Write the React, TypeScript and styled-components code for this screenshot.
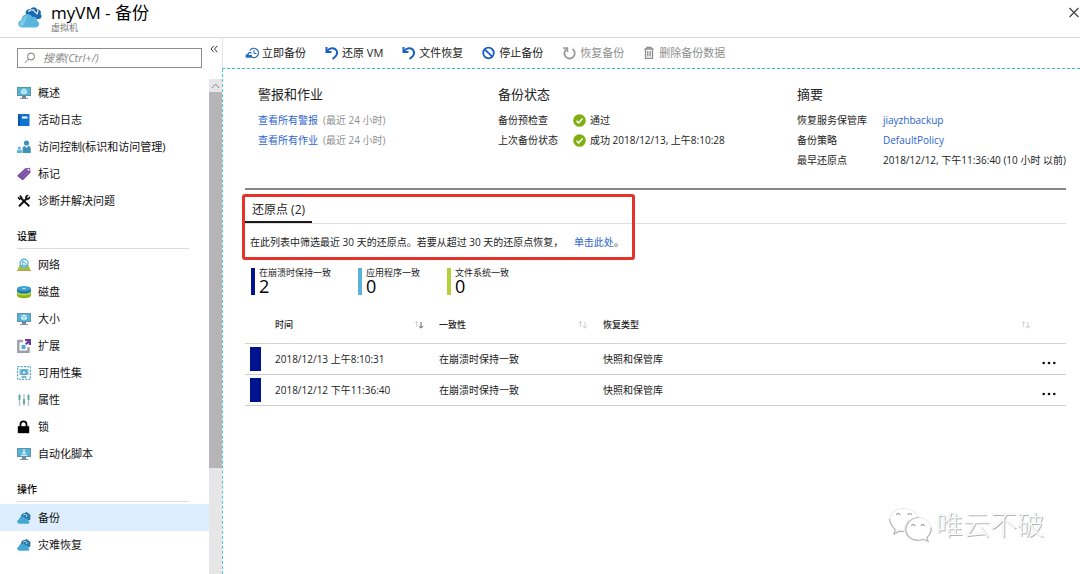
import React from "react";
import styled, { createGlobalStyle, css } from "styled-components";

const GlobalStyle = createGlobalStyle`
  *, *::before, *::after { box-sizing: border-box; }
  body {
    margin: 0;
    background: #fff;
    color: #222;
    font: 10px/20px "Open Sans", "Noto Sans CJK SC", sans-serif;
  }
  button, input { font: inherit; color: inherit; }
  h1, h2, h3, p, ul, dl, dd { margin: 0; padding: 0; }
  ul { list-style: none; }
  svg { display: block; flex: none; }
`;

const resetButton = css`
  border: 0;
  padding: 0;
  background: none;
  cursor: pointer;
`;

const Shell = styled.div`
  position: relative;
  display: flex;
  flex-direction: column;
  height: 100vh;
  overflow: hidden;
`;

const Header = styled.header`
  display: flex;
  flex: none;
  align-items: flex-start;
  gap: 8px;
  height: 38px;
  padding: 4px 0 0 17px;
  border-bottom: 1px solid #d9d9d9;
`;

const TitleBlock = styled.div`
  flex: 1;
`;

const Title = styled.h1`
  font-size: 17px;
  font-weight: 400;
  line-height: 18px;
  color: #000;
`;

const Subtitle = styled.p`
  font-size: 9px;
  line-height: 12px;
  color: #777;
`;

const CloseButton = styled.button`
  ${resetButton}
  padding-top: 3px;
`;

const Body = styled.div`
  display: flex;
  flex: 1;
  min-height: 0;
`;

const Sidebar = styled.aside`
  display: flex;
  flex: none;
  flex-direction: column;
  width: 222px;
`;

const SidebarTop = styled.div`
  display: flex;
  flex: none;
  align-items: flex-start;
  gap: 8px;
  height: 41px;
  padding: 4px 4px 0 17px;
`;

const SearchBox = styled.label`
  display: flex;
  flex: 1;
  align-items: center;
  gap: 7px;
  height: 20px;
  margin-top: 6px;
  padding-left: 6px;
  border: 1px solid #8c8c8c;
`;

const SearchInput = styled.input`
  flex: 1;
  min-width: 0;
  padding: 0;
  border: 0;
  outline: 0;
  background: none;
  font-size: 11px;
  line-height: 18px;
  &::placeholder {
    color: #8a8a8a;
    font-style: italic;
    opacity: 1;
  }
`;

const CollapseButton = styled.button`
  ${resetButton}
  padding-top: 3px;
`;

const SidebarBody = styled.div`
  display: flex;
  flex: 1;
  min-height: 0;
`;

const Nav = styled.nav`
  flex: 1;
  overflow: hidden;
`;

const NavHeading = styled.h2`
  margin: 12px 20px 2px 17px;
  padding-bottom: 2px;
  border-bottom: 1px solid #dcdcdc;
  font-size: 10px;
  font-weight: 500;
  line-height: 20px;
  color: #000;
`;

const NavLink = styled.a<{ $active?: boolean }>`
  display: flex;
  align-items: center;
  gap: 7px;
  height: 27px;
  padding-left: 17px;
  background: ${(p) => (p.$active ? "#dceeff" : "transparent")};
  color: #111;
  font-size: 11px;
  text-decoration: none;
`;

const ScrollTrack = styled.div`
  display: flex;
  flex: none;
  flex-direction: column;
  width: 13px;
  background: #e6e6e6;
`;

const ScrollUp = styled.button`
  ${resetButton}
  display: flex;
  flex: none;
  align-items: center;
  justify-content: center;
  height: 13px;
`;

const ScrollThumb = styled.div`
  height: 76%;
  background: #b5b5b5;
`;

const Main = styled.main`
  display: flex;
  flex: 1;
  flex-direction: column;
  min-width: 0;
`;

const Toolbar = styled.div`
  display: flex;
  flex: none;
  align-items: center;
  gap: 19px;
  height: 31px;
  padding-left: 22px;
  border-left: 1px solid #e2e2e2;
  border-bottom: 1px dashed #3fb6cf;
`;

const ToolButton = styled.button`
  ${resetButton}
  display: flex;
  align-items: center;
  gap: 3px;
  font-size: 11px;
  white-space: nowrap;
  &:disabled { color: #8f8f8f; }
`;

const Content = styled.div`
  flex: 1;
  padding: 15px 14px 0 22px;
  border-left: 1px dashed #45cbd6;
`;

const Summary = styled.div`
  display: grid;
  grid-template-columns: minmax(0, 240fr) minmax(0, 299fr) minmax(0, 269fr);
  padding: 0 0 18px 13px;
  border-bottom: 2px solid #868686;
  white-space: nowrap;
`;

const SummaryHeading = styled.h2`
  margin-bottom: 6px;
  font-size: 13px;
  font-weight: 400;
  line-height: 20px;
`;

const AlertLine = styled.p`
  display: flex;
  gap: 5px;
`;

const Facts = styled.dl<{ $label: number }>`
  display: grid;
  grid-template-columns: ${(p) => p.$label}px auto;
  justify-content: start;
`;

const FactValue = styled.dd`
  display: flex;
  align-items: center;
  gap: 4px;
`;

const Link = styled.a`
  color: #2b63cf;
  text-decoration: none;
`;

const Muted = styled.span`
  color: #8f8f8f;
`;

const RestorePoints = styled.section`
  position: relative;
  padding-top: 9px;
`;

const Highlight = styled.div`
  position: absolute;
  top: 4px;
  left: -3px;
  width: 393px;
  height: 66px;
  border: 3px solid #e5322b;
  border-radius: 3px;
  pointer-events: none;
`;

const TabBar = styled.div`
  display: flex;
  height: 25px;
  border-bottom: 1px solid #dedede;
`;

const Tab = styled.button`
  ${resetButton}
  padding: 0 7px;
  border-bottom: 2px solid #1a1a1a;
  font-size: 12px;
  line-height: 22px;
`;

const Hint = styled.p`
  padding: 8px 0 0 5px;
`;

const HintLink = styled(Link)`
  margin-left: 8px;
`;

const Stats = styled.ul`
  display: flex;
  gap: 27px;
  padding: 16px 0 0 6px;
`;

const Stat = styled.li<{ $color: string }>`
  height: 27px;
  padding-left: 4px;
  border-left: 4px solid ${(p) => p.$color};
`;

const StatLabel = styled.p`
  font-size: 9px;
  line-height: 10px;
`;

const StatValue = styled.p`
  font-size: 18px;
  line-height: 17px;
  color: #000;
`;

const Table = styled.table`
  width: 100%;
  margin-top: 13px;
  border-collapse: collapse;
  table-layout: fixed;
  text-align: left;
`;

const Th = styled.th<{ $inset?: number }>`
  height: 35px;
  padding: 0 ${(p) => p.$inset ?? 15}px 0 0;
  border-bottom: 1px solid #d4d4d4;
  font-size: 9px;
  font-weight: 500;
`;

const ThInner = styled.div`
  display: flex;
  align-items: center;
  justify-content: space-between;
`;

const Td = styled.td`
  height: 31px;
  padding: 0;
  border-bottom: 1px solid #cfcfcf;
`;

const Swatch = styled.div`
  width: 11px;
  height: 24px;
  margin-left: 5px;
  background: #00138f;
`;

const MoreButton = styled.button`
  ${resetButton}
  display: block;
  margin: 8px 10px 0 auto;
`;

const Watermark = styled.div`
  position: absolute;
  right: 36px;
  bottom: 31px;
  display: flex;
  align-items: center;
  gap: 4px;
  color: #fff;
  font-size: 27px;
  font-weight: 300;
  line-height: 34px;
  text-shadow: 1px 1px 0 #b4b4b4, 0 0 1px #d0d0d0;
  pointer-events: none;
`;

const MonitorIcon = ({ download = false }: { download?: boolean }) => (
  <svg width="14" height="14" viewBox="0 0 14 14">
    <path d="M0 1h14v9H0z" fill="#5c93ad" />
    <path d="M1 2h12v7H1z" fill="#55b4d8" />
    <path d="M5 10h4v2H5z" fill="#748894" />
    <path d="M3 12h8v1H3z" fill="#8b8fa5" />
    {download ? (
      <path d="M7 2v5M5 5l2 2 2-2M4 8.2h6" fill="none" stroke="#fff" />
    ) : (
      <>
        <path d="m7 2.6 2.8 1.5v3L7 8.6 4.2 7.1v-3z" fill="#d9f4fc" />
        <path d="M7 5.3 4.5 4M7 5.3 9.5 4M7 5.3v3" stroke="#55b4d8" strokeWidth=".7" />
      </>
    )}
  </svg>
);

const BookIcon = () => (
  <svg width="14" height="14" viewBox="0 0 14 14">
    <path d="M1 1h11.5v12H1z" fill="#1173cf" />
    <path d="M1 1h2v12H1z" fill="#07569f" />
    <path d="M5 3.5h5.5v2H5z" fill="#fff" />
  </svg>
);

const PeopleIcon = () => (
  <svg width="14" height="14" viewBox="0 0 14 14">
    <circle cx="9.5" cy="3" r="2.6" fill="#3c93b8" />
    <path d="M5.5 13V9c0-2 1.2-3 2.4-3l1.6 2 1.6-2c1.6 0 2.7 1 2.7 3v4z" fill="#3c93b8" />
    <circle cx="2.4" cy="8" r="1.5" fill="#57b4d5" />
    <path d="M0 13v-2c0-1 .7-1.5 1.2-1.5l1.2 1 1.2-1c.7 0 1.2.5 1.2 1.5v2z" fill="#57b4d5" />
  </svg>
);

const TagIcon = () => (
  <svg width="14" height="14" viewBox="0 0 14 14">
    <path d="M8.2 1.2 13 .8l.6 4.8-7.2 7.2c-.5.5-1 .5-1.5 0L.8 9.4c-.5-.5-.5-1 0-1.5z" fill="#7c4ea5" />
    <path d="m9 3-6 6M11 5l-5.5 5.5" stroke="#9672b8" strokeWidth=".8" />
    <circle cx="11.5" cy="2.8" r="1" fill="#fff" />
  </svg>
);

const ToolsIcon = () => (
  <svg width="14" height="14" viewBox="0 0 14 14" fill="none" stroke="#111">
    <path d="m2 12.3 7.5-7.6" strokeWidth="2" />
    <path d="m3.5 3.8 8.8 8.5" strokeWidth="2" />
    <path d="M12.8 2.5 11 4.3 9.6 3 11.4 1.2C9.7.6 8 2 8.4 4.1l1.7 1.7c2 .2 3.4-1.5 2.7-3.3z" fill="#111" strokeWidth=".5" />
    <path d="M1 3.3 2.6 5l1.8-1.7L2.8 1.6" strokeWidth="1.6" />
  </svg>
);

const NetworkIcon = () => (
  <svg width="14" height="14" viewBox="0 0 14 14">
    <path d="M2.6 7h8.8L14 13H0z" fill="#9fc045" />
    <path d="M.5 12h13l.5 1H0z" fill="#c69a4f" />
    <circle cx="7" cy="5.2" r="4" fill="#e8f7fd" stroke="#50acd5" strokeWidth="1.2" />
    <path d="m4.5 4.3 2-1 3 3.5M6.5 3.3 5 7.3h4" fill="none" stroke="#3d95c5" strokeWidth=".8" />
  </svg>
);

const DiskIcon = () => (
  <svg width="14" height="14" viewBox="0 0 14 14">
    <path d="M0 8v2.500c0 1.500 3 2.700 7 2.700s7-1.200 7-2.700V8z" fill="#8bb51a" />
    <ellipse cx="7" cy="8" rx="7" ry="2.6" fill="#b9d94b" />
    <path d="M0 3.600V6c0 1.500 3 2.600 7 2.600S14 7.500 14 6V3.600z" fill="#1c76a9" />
    <ellipse cx="7" cy="3.6" rx="7" ry="2.7" fill="#409fd0" />
    <ellipse cx="7" cy="3.5" rx="2" ry=".8" fill="#a6dbf2" />
  </svg>
);

const ExtensionIcon = () => (
  <svg width="14" height="14" viewBox="0 0 14 14" fill="none">
    <path d="M6 2H1.300v10.700h10.200V8" stroke="#9aa0a5" strokeWidth="2.4" />
    <path d="M4.500 6h4v4h-4z" fill="#4fa9dc" />
    <path d="M8 0h6v6h-2.200V4L9.500 6 8 4.500 10.400 2H8z" fill="#6b3d98" />
  </svg>
);

const AvailabilityIcon = () => (
  <svg width="14" height="14" viewBox="0 0 14 14" fill="none">
    <path d="M.6.6h12.800v12.800H.6z" stroke="#56a3c8" strokeWidth="1.2" strokeDasharray="2 1.2" />
    <path d="M2.500 3h9v6h-9z" fill="#7dbfda" />
    <circle cx="7" cy="6.5" r="2.7" fill="#3f91b8" />
    <path d="m7 4.800 1.500.8v1.800L7 8.200l-1.500-.8V5.600z" fill="#c8ecf8" />
    <path d="M4.500 11h5" stroke="#6599af" strokeWidth="1.5" />
  </svg>
);

const SlidersIcon = () => (
  <svg width="14" height="14" viewBox="0 0 14 14" fill="none">
    <path d="M2.500 1v12M7 1v12M11.500 1v12" stroke="#b6c2c5" strokeWidth="1.4" />
    <path d="M2.500 2v5M7 6v5M11.500 2v5" stroke="#5da79f" strokeWidth="1.8" />
  </svg>
);

const LockIcon = () => (
  <svg width="14" height="14" viewBox="0 0 14 14">
    <path d="M3.500 7V4.300a3 3 0 0 1 6 0V7" fill="none" stroke="#000" strokeWidth="1.8" />
    <path d="M.8 6.200h11.400v7H.8z" fill="#000" />
  </svg>
);

const BackupIcon = () => (
  <svg width="14" height="14" viewBox="0 0 14 14">
    <path d="M3.800 6C4 3 6 1.800 8 2.100L9.500.8 13.500 4l-.3 5-3 .5z" fill="#2d7aa8" />
    <path d="M6 4.300c1-1.500 3.500-1.200 4.200.7L9 6" fill="none" stroke="#d9eef8" strokeWidth=".8" />
    <path d="M2.700 12.800C-.5 12.700-.5 8.800 2 8.500c.2-3.700 5.300-4.200 6.300-1 2.200-.2 3 1 2.700 2.200 2 .3 1.800 3.100-.2 3.100z" fill="#45a7d4" />
  </svg>
);

const VaultIcon = () => (
  <svg width="26" height="24" viewBox="0 0 26 24">
    <path d="M9 10C7.500 6 12 4.500 13.500 5.500 14.500 2.500 19 2.500 20 5.500c3.500-.2 4.600 2.500 3.500 4.500 2 1.500 1 5-1.500 5h-7z" fill="#1767b5" />
    <path d="M11.500 8c1-3 6-2.500 6.500.5M16 5.500l4 4.500 1.200-4" fill="none" stroke="#fff" strokeWidth="1.1" />
    <path d="M5.500 23.500C.3 23.500-.3 17 4.500 16.200 4.300 9.600 13 7.800 15.300 13c3.500-.8 5.500 1.700 4.700 4 3.500.8 2.700 6.500-1.500 6.500z" fill="#58b5dc" />
    <path d="M5 22.500c-3.500-.5-3.200-4.700.7-5.200-.1-4 3-5.900 5.500-5.600C8 13 9 19 5 22.500z" fill="#83cae6" />
  </svg>
);

const BackupNowIcon = () => (
  <svg width="14" height="14" viewBox="0 0 14 14" fill="none" stroke="#286bc1">
    <path d="M5 4.500A4.600 4.600 0 1 1 6.800 11H1.500c-1-1 0-2.600 1.600-2.600C3 6.400 5.300 5.800 6.200 7.300" strokeWidth="1.3" />
    <path d="M9 4v3.500h2.500" strokeWidth="1" />
    <path d="M2 10h5" strokeWidth="2" />
  </svg>
);

const UndoIcon = () => (
  <svg width="14" height="14" viewBox="0 0 14 14" fill="none" stroke="#1b5fc1" strokeWidth="2">
    <path d="M1.500 1v5h5" />
    <path d="M2 5.500C4 2 9 1 11.300 4.200c2 3-.3 6.300-3.800 8.800" />
  </svg>
);

const StopIcon = () => (
  <svg width="14" height="14" viewBox="0 0 14 14" fill="none" stroke="#1b5fc1" strokeWidth="1.8">
    <circle cx="6.5" cy="7" r="5.3" />
    <path d="m2.800 3.300 7.400 7.400" />
  </svg>
);

const ResumeIcon = () => (
  <svg width="15" height="14" viewBox="0 0 15 14" fill="none" stroke="#999" strokeWidth="1.8">
    <path d="M5 2.800A5.200 5.200 0 1 0 10.500 3" />
    <path d="M1 2h4.500v4" strokeWidth="1.5" />
  </svg>
);

const TrashIcon = () => (
  <svg width="13" height="14" viewBox="0 0 13 14" fill="none" stroke="#8c8c8c" strokeWidth="1.3">
    <path d="M1.500 3h9M4 3V1.300h4V3M2.500 3v9.300h7V3M4.800 5v5.500M7.200 5v5.500" />
  </svg>
);

const CheckIcon = () => (
  <svg width="13" height="13" viewBox="0 0 13 13">
    <circle cx="6.5" cy="6.5" r="6.3" fill="#7fb010" />
    <path d="m3.500 6.700 2.100 2.100 4-4.300" fill="none" stroke="#fff" strokeWidth="1.5" />
  </svg>
);

const SortIcon = ({ active = false }: { active?: boolean }) => (
  <svg width="10" height="10" viewBox="0 0 10 10" fill="none">
    <path d="M2.500 7V1.500M1 3l1.500-1.500L4 3" stroke="#ccc" strokeWidth=".8" />
    <path d="M7 2v6M4.800 6 7 8.200 9.200 6" stroke={active ? "#666" : "#ccc"} strokeWidth="1" />
  </svg>
);

const DotsIcon = () => (
  <svg width="14" height="4" viewBox="0 0 14 4" fill="#111">
    <circle cx="1.7" cy="2" r="1.3" />
    <circle cx="7" cy="2" r="1.3" />
    <circle cx="12.3" cy="2" r="1.3" />
  </svg>
);

const ChatIcon = () => (
  <svg width="44" height="36" viewBox="0 0 44 36" fill="none" stroke="#b9b9b9" strokeWidth="1.2">
    <path d="M16 25c-2 0-3-.2-4.500-.8L6 27l1.200-4.500C-3 14 2 2 15.500 1.500 24 1.500 29 6 30 11" stroke="#ececec" />
    <path d="M1.500 12c.5 4.500 3 8 5.700 10.500L6 27l5.500-2.800 5.500.3" />
    <path d="M31 10.500C11 11 13 33.500 30 33.300c2 0 4-.3 5.500-1l4.500 2.200-1-4c8-7.500 2.500-20-8-20z" fill="#fff" stroke="#ececec" />
    <path d="M31 10.500c-17 1-17.500 22.500-1 22.800 2 0 4-.3 5.500-1l4.500 2.200-1-4c3-2.500 4.500-6 4.200-10" />
    <path d="M8.500 8c.5-2 3-2 3.500 0M20 8c.5-2 3-2 3.500 0M23.500 19c.5-2 3-2 3.500 0M33 19c.5-2 3-2 3.500 0" stroke="#999" />
  </svg>
);

type NavItem = { label: string; icon: React.ReactNode; active?: boolean };

const navGroups: { heading?: string; items: NavItem[] }[] = [
  {
    items: [
      { label: "概述", icon: <MonitorIcon /> },
      { label: "活动日志", icon: <BookIcon /> },
      { label: "访问控制(标识和访问管理)", icon: <PeopleIcon /> },
      { label: "标记", icon: <TagIcon /> },
      { label: "诊断并解决问题", icon: <ToolsIcon /> },
    ],
  },
  {
    heading: "设置",
    items: [
      { label: "网络", icon: <NetworkIcon /> },
      { label: "磁盘", icon: <DiskIcon /> },
      { label: "大小", icon: <MonitorIcon /> },
      { label: "扩展", icon: <ExtensionIcon /> },
      { label: "可用性集", icon: <AvailabilityIcon /> },
      { label: "属性", icon: <SlidersIcon /> },
      { label: "锁", icon: <LockIcon /> },
      { label: "自动化脚本", icon: <MonitorIcon download /> },
    ],
  },
  {
    heading: "操作",
    items: [
      { label: "备份", icon: <BackupIcon />, active: true },
      { label: "灾难恢复", icon: <BackupIcon /> },
    ],
  },
  { heading: "监视", items: [] },
];

const tools = [
  { label: "立即备份", icon: <BackupNowIcon /> },
  { label: "还原 VM", icon: <UndoIcon /> },
  { label: "文件恢复", icon: <UndoIcon /> },
  { label: "停止备份", icon: <StopIcon /> },
  { label: "恢复备份", icon: <ResumeIcon />, disabled: true },
  { label: "删除备份数据", icon: <TrashIcon />, disabled: true },
];

const stats = [
  { label: "在崩溃时保持一致", value: 2, color: "#00138f" },
  { label: "应用程序一致", value: 0, color: "#5cb1d6" },
  { label: "文件系统一致", value: 0, color: "#b6cf3a" },
];

const points = [
  { time: "2018/12/13 上午8:10:31", consistency: "在崩溃时保持一致", type: "快照和保管库" },
  { time: "2018/12/12 下午11:36:40", consistency: "在崩溃时保持一致", type: "快照和保管库" },
];

export default function App() {
  return (
    <Shell lang="zh-CN">
      <GlobalStyle />
      <Header>
        <VaultIcon />
        <TitleBlock>
          <Title>myVM - 备份</Title>
          <Subtitle>虚拟机</Subtitle>
        </TitleBlock>
        <CloseButton aria-label="关闭">
          <svg width="12" height="12" viewBox="0 0 12 12" stroke="#444" strokeWidth="1.2">
            <path d="m1.500 1 9 9M10.500 1l-9 9" />
          </svg>
        </CloseButton>
      </Header>
      <Body>
        <Sidebar>
          <SidebarTop>
            <SearchBox>
              <svg width="12" height="12" viewBox="0 0 12 12" fill="none" stroke="#777">
                <circle cx="7" cy="4.5" r="3.5" />
                <path d="M4.500 7 1 10.800" />
              </svg>
              <SearchInput type="text" aria-label="搜索" placeholder="搜索(Ctrl+/)" />
            </SearchBox>
            <CollapseButton aria-label="折叠菜单">
              <svg width="8" height="8" viewBox="0 0 8 8" fill="none" stroke="#333">
                <path d="M3.800.8 1 4l2.800 3.200M7.300.8 4.500 4l2.800 3.200" />
              </svg>
            </CollapseButton>
          </SidebarTop>
          <SidebarBody>
            <Nav>
              {navGroups.map((group, i) => (
                <React.Fragment key={i}>
                  {group.heading && <NavHeading>{group.heading}</NavHeading>}
                  <ul>
                    {group.items.map((item) => (
                      <li key={item.label}>
                        <NavLink href="#" $active={item.active}>
                          {item.icon}
                          {item.label}
                        </NavLink>
                      </li>
                    ))}
                  </ul>
                </React.Fragment>
              ))}
            </Nav>
            <ScrollTrack>
              <ScrollUp aria-label="向上滚动">
                <svg width="9" height="6" viewBox="0 0 9 6" fill="none" stroke="#888">
                  <path d="m1 5 3.500-4L8 5" />
                </svg>
              </ScrollUp>
              <ScrollThumb />
            </ScrollTrack>
          </SidebarBody>
        </Sidebar>
        <Main>
          <Toolbar>
            {tools.map((tool) => (
              <ToolButton key={tool.label} disabled={tool.disabled}>
                {tool.icon}
                {tool.label}
              </ToolButton>
            ))}
          </Toolbar>
          <Content>
            <Summary>
              <section>
                <SummaryHeading>警报和作业</SummaryHeading>
                <AlertLine><Link href="#">查看所有警报</Link><Muted>(最近 24 小时)</Muted></AlertLine>
                <AlertLine><Link href="#">查看所有作业</Link><Muted>(最近 24 小时)</Muted></AlertLine>
              </section>
              <section>
                <SummaryHeading>备份状态</SummaryHeading>
                <Facts $label={75}>
                  <dt>备份预检查</dt>
                  <FactValue><CheckIcon />通过</FactValue>
                  <dt>上次备份状态</dt>
                  <FactValue><CheckIcon />成功 2018/12/13, 上午8:10:28</FactValue>
                </Facts>
              </section>
              <section>
                <SummaryHeading>摘要</SummaryHeading>
                <Facts $label={86}>
                  <dt>恢复服务保管库</dt>
                  <FactValue><Link href="#">jiayzhbackup</Link></FactValue>
                  <dt>备份策略</dt>
                  <FactValue><Link href="#">DefaultPolicy</Link></FactValue>
                  <dt>最早还原点</dt>
                  <FactValue>2018/12/12, 下午11:36:40 (10 小时 以前)</FactValue>
                </Facts>
              </section>
            </Summary>
            <RestorePoints>
              <TabBar role="tablist">
                <Tab role="tab" aria-selected="true">还原点 (2)</Tab>
              </TabBar>
              <Hint>
                在此列表中筛选最近 30 天的还原点。若要从超过 30 天的还原点恢复，{" "}
                <HintLink href="#">单击此处</HintLink>。
              </Hint>
              <Highlight />
              <Stats>
                {stats.map((s) => (
                  <Stat key={s.label} $color={s.color}>
                    <StatLabel>{s.label}</StatLabel>
                    <StatValue>{s.value}</StatValue>
                  </Stat>
                ))}
              </Stats>
              <Table>
                <colgroup>
                  <col width="30" />
                  <col width="164" />
                  <col width="164" />
                  <col />
                  <col width="30" />
                </colgroup>
                <thead>
                  <tr>
                    <Th />
                    <Th scope="col"><ThInner>时间<SortIcon active /></ThInner></Th>
                    <Th scope="col"><ThInner>一致性<SortIcon /></ThInner></Th>
                    <Th scope="col" colSpan={2} $inset={35}><ThInner>恢复类型<SortIcon /></ThInner></Th>
                  </tr>
                </thead>
                <tbody>
                  {points.map((p) => (
                    <tr key={p.time}>
                      <Td><Swatch /></Td>
                      <Td>{p.time}</Td>
                      <Td>{p.consistency}</Td>
                      <Td>{p.type}</Td>
                      <Td><MoreButton aria-label="更多操作"><DotsIcon /></MoreButton></Td>
                    </tr>
                  ))}
                </tbody>
              </Table>
            </RestorePoints>
          </Content>
        </Main>
      </Body>
      <Watermark><ChatIcon />唯云不破</Watermark>
    </Shell>
  );
}
